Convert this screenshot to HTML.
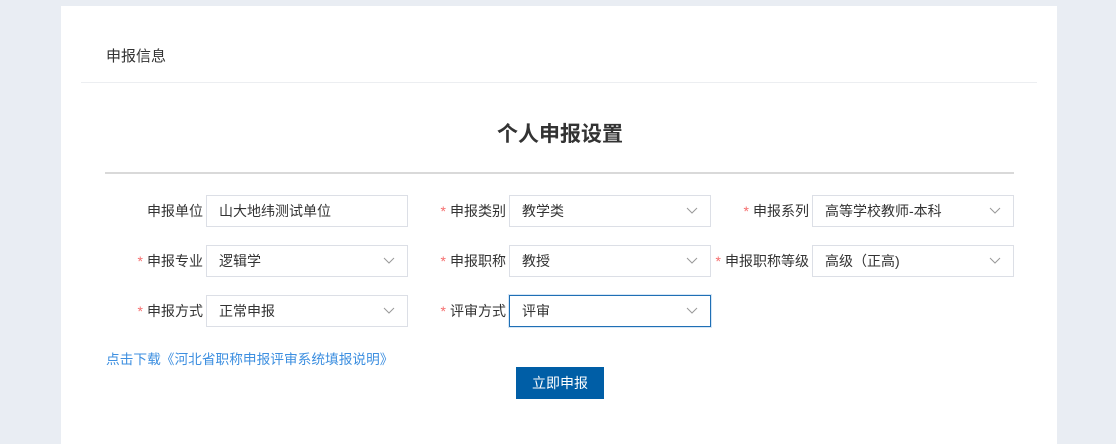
<!DOCTYPE html>
<html><head><meta charset="utf-8"><style>
*{margin:0;padding:0;box-sizing:border-box}
body{width:1116px;height:444px;background:#e9edf3;font-family:"Liberation Sans","Noto Sans CJK SC",sans-serif;position:relative;overflow:hidden;color:#333}
.card{position:absolute;left:61px;top:6px;width:996px;height:438px;background:#fff}
.a{position:absolute}
.lbl{position:absolute;font-size:14px;text-align:right;width:120px;line-height:32px;color:#333}
.lbl i{color:#f56c6c;font-style:normal;margin-right:4px}
.in{position:absolute;width:202px;height:32px;border:1px solid #dcdfe6;font-size:14px;line-height:30px;padding-left:12px;color:#333;background:#fff}
.in svg{position:absolute;right:12px;top:11px}
.in.f{border-color:#1f6fb5;box-shadow:0 0 0 1px #d6e6f5}
</style></head><body>
<div class="card"></div>
<div class="a" style="left:106px;top:45px;font-size:15px;color:#333">申报信息</div>
<div class="a" style="left:81px;top:82px;width:956px;height:1px;background:#eceef1"></div>
<div class="a" style="left:0;width:1116px;top:118px;text-align:center;font-size:21px;font-weight:bold;color:#333;padding-left:4px">个人申报设置</div>
<div class="a" style="left:105px;top:172px;width:909px;height:2px;background:#d9d9d9"></div>

<div class="lbl" style="left:83px;top:195px">申报单位</div>
<div class="in" style="left:206px;top:195px">山大地纬测试单位</div>
<div class="lbl" style="left:386px;top:195px"><i>*</i>申报类别</div>
<div class="in" style="left:509px;top:195px">教学类<svg width="12" height="8"><path d="M1 1l5 5 5-5" fill="none" stroke="#999" stroke-width="1"/></svg></div>
<div class="lbl" style="left:689px;top:195px"><i>*</i>申报系列</div>
<div class="in" style="left:812px;top:195px">高等学校教师-本科<svg width="12" height="8"><path d="M1 1l5 5 5-5" fill="none" stroke="#999" stroke-width="1"/></svg></div>

<div class="lbl" style="left:83px;top:245px"><i>*</i>申报专业</div>
<div class="in" style="left:206px;top:245px">逻辑学<svg width="12" height="8"><path d="M1 1l5 5 5-5" fill="none" stroke="#999" stroke-width="1"/></svg></div>
<div class="lbl" style="left:386px;top:245px"><i>*</i>申报职称</div>
<div class="in" style="left:509px;top:245px">教授<svg width="12" height="8"><path d="M1 1l5 5 5-5" fill="none" stroke="#999" stroke-width="1"/></svg></div>
<div class="lbl" style="left:689px;top:245px;width:120px"><i>*</i>申报职称等级</div>
<div class="in" style="left:812px;top:245px">高级（正高)<svg width="12" height="8"><path d="M1 1l5 5 5-5" fill="none" stroke="#999" stroke-width="1"/></svg></div>

<div class="lbl" style="left:83px;top:295px"><i>*</i>申报方式</div>
<div class="in" style="left:206px;top:295px">正常申报<svg width="12" height="8"><path d="M1 1l5 5 5-5" fill="none" stroke="#999" stroke-width="1"/></svg></div>
<div class="lbl" style="left:386px;top:295px"><i>*</i>评审方式</div>
<div class="in f" style="left:509px;top:295px">评审<svg width="12" height="8"><path d="M1 1l5 5 5-5" fill="none" stroke="#999" stroke-width="1"/></svg></div>

<div class="a" style="left:106px;top:348px;font-size:13.7px;color:#3d8fe0">点击下载《河北省职称申报评审系统填报说明》</div>
<div class="a" style="left:516px;top:367px;width:88px;height:32px;background:#005ea6;color:#fff;font-size:14px;line-height:32px;text-align:center">立即申报</div>
</body></html>
